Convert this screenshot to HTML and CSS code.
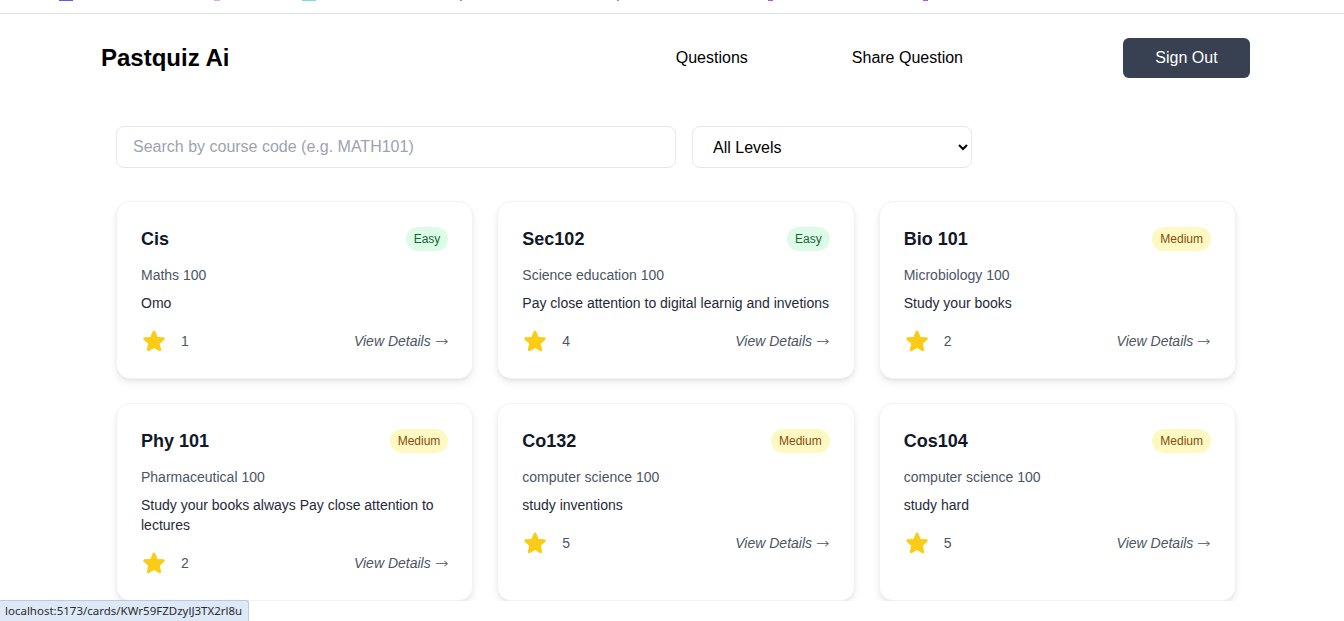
FILE: index.html
```html
<!DOCTYPE html>
<html lang="en">
<head>
<meta charset="utf-8">
<title>Pastquiz Ai</title>
<link rel="stylesheet" href="styles.css">
</head>
<body>
<div class="topstrip">
  <span class="mark m1"></span>
  <span class="mark m2"></span>
  <span class="mark m3"></span>
  <span class="mark m4"></span>
  <span class="mark m5"></span>
  <span class="mark m6"></span>
  <span class="mark m7"></span>
</div>
<header class="header">
  <div class="logo">Pastquiz Ai</div>
  <nav class="nav">
    <a class="nav-link" href="#">Questions</a>
    <a class="nav-link" href="#">Share Question</a>
  </nav>
  <button class="signout">Sign Out</button>
</header>
<main class="main">
  <div class="filters">
    <input class="search" type="text" placeholder="Search by course code (e.g. MATH101)">
    <select class="level">
      <option>All Levels</option>
      <option>100</option>
      <option>200</option>
    </select>
  </div>
  <div class="grid">
    <div class="card">
      <div class="card-head"><h3 class="title">Cis</h3><span class="badge easy">Easy</span></div>
      <p class="sub">Maths 100</p>
      <p class="desc">Omo</p>
      <div class="foot">
        <div class="rating"><svg class="star" viewBox="0 0 24 24"><path d="M10.788 3.21c.448-1.077 1.976-1.077 2.424 0l2.082 5.006 5.404.434c1.164.093 1.636 1.545.749 2.305l-4.117 3.527 1.257 5.273c.271 1.136-.964 2.033-1.96 1.425L12 18.354 7.373 21.18c-.996.608-2.231-.29-1.96-1.425l1.257-5.273-4.117-3.527c-.887-.76-.415-2.212.749-2.305l5.404-.434 2.082-5.005Z"/></svg><span class="count">1</span></div>
        <a class="details" href="#">View Details <span class="arrow">→</span></a>
      </div>
    </div>
    <div class="card">
      <div class="card-head"><h3 class="title">Sec102</h3><span class="badge easy">Easy</span></div>
      <p class="sub">Science education 100</p>
      <p class="desc">Pay close attention to digital learnig and invetions</p>
      <div class="foot">
        <div class="rating"><svg class="star" viewBox="0 0 24 24"><path d="M10.788 3.21c.448-1.077 1.976-1.077 2.424 0l2.082 5.006 5.404.434c1.164.093 1.636 1.545.749 2.305l-4.117 3.527 1.257 5.273c.271 1.136-.964 2.033-1.96 1.425L12 18.354 7.373 21.18c-.996.608-2.231-.29-1.96-1.425l1.257-5.273-4.117-3.527c-.887-.76-.415-2.212.749-2.305l5.404-.434 2.082-5.005Z"/></svg><span class="count">4</span></div>
        <a class="details" href="#">View Details <span class="arrow">→</span></a>
      </div>
    </div>
    <div class="card">
      <div class="card-head"><h3 class="title">Bio 101</h3><span class="badge medium">Medium</span></div>
      <p class="sub">Microbiology 100</p>
      <p class="desc">Study your books</p>
      <div class="foot">
        <div class="rating"><svg class="star" viewBox="0 0 24 24"><path d="M10.788 3.21c.448-1.077 1.976-1.077 2.424 0l2.082 5.006 5.404.434c1.164.093 1.636 1.545.749 2.305l-4.117 3.527 1.257 5.273c.271 1.136-.964 2.033-1.96 1.425L12 18.354 7.373 21.18c-.996.608-2.231-.29-1.96-1.425l1.257-5.273-4.117-3.527c-.887-.76-.415-2.212.749-2.305l5.404-.434 2.082-5.005Z"/></svg><span class="count">2</span></div>
        <a class="details" href="#">View Details <span class="arrow">→</span></a>
      </div>
    </div>
    <div class="card">
      <div class="card-head"><h3 class="title">Phy 101</h3><span class="badge medium">Medium</span></div>
      <p class="sub">Pharmaceutical 100</p>
      <p class="desc">Study your books always Pay close attention to lectures</p>
      <div class="foot">
        <div class="rating"><svg class="star" viewBox="0 0 24 24"><path d="M10.788 3.21c.448-1.077 1.976-1.077 2.424 0l2.082 5.006 5.404.434c1.164.093 1.636 1.545.749 2.305l-4.117 3.527 1.257 5.273c.271 1.136-.964 2.033-1.96 1.425L12 18.354 7.373 21.18c-.996.608-2.231-.29-1.96-1.425l1.257-5.273-4.117-3.527c-.887-.76-.415-2.212.749-2.305l5.404-.434 2.082-5.005Z"/></svg><span class="count">2</span></div>
        <a class="details" href="#">View Details <span class="arrow">→</span></a>
      </div>
    </div>
    <div class="card">
      <div class="card-head"><h3 class="title">Co132</h3><span class="badge medium">Medium</span></div>
      <p class="sub">computer science 100</p>
      <p class="desc">study inventions</p>
      <div class="foot">
        <div class="rating"><svg class="star" viewBox="0 0 24 24"><path d="M10.788 3.21c.448-1.077 1.976-1.077 2.424 0l2.082 5.006 5.404.434c1.164.093 1.636 1.545.749 2.305l-4.117 3.527 1.257 5.273c.271 1.136-.964 2.033-1.96 1.425L12 18.354 7.373 21.18c-.996.608-2.231-.29-1.96-1.425l1.257-5.273-4.117-3.527c-.887-.76-.415-2.212.749-2.305l5.404-.434 2.082-5.005Z"/></svg><span class="count">5</span></div>
        <a class="details" href="#">View Details <span class="arrow">→</span></a>
      </div>
    </div>
    <div class="card">
      <div class="card-head"><h3 class="title">Cos104</h3><span class="badge medium">Medium</span></div>
      <p class="sub">computer science 100</p>
      <p class="desc">study hard</p>
      <div class="foot">
        <div class="rating"><svg class="star" viewBox="0 0 24 24"><path d="M10.788 3.21c.448-1.077 1.976-1.077 2.424 0l2.082 5.006 5.404.434c1.164.093 1.636 1.545.749 2.305l-4.117 3.527 1.257 5.273c.271 1.136-.964 2.033-1.96 1.425L12 18.354 7.373 21.18c-.996.608-2.231-.29-1.96-1.425l1.257-5.273-4.117-3.527c-.887-.76-.415-2.212.749-2.305l5.404-.434 2.082-5.005Z"/></svg><span class="count">5</span></div>
        <a class="details" href="#">View Details <span class="arrow">→</span></a>
      </div>
    </div>
  </div>
</main>
<div class="statusbar">localhost:5173/cards/KWr59FZDzylJ3TX2rl8u</div>
</body>
</html>
```

FILE: styles.css
```css
* { box-sizing: border-box; }

html, body {
  margin: 0;
  padding: 0;
  background: #ffffff;
  font-family: "Liberation Sans", Arial, sans-serif;
  color: #111827;
  overflow: hidden;
}

.topstrip {
  height: 14px;
  border-bottom: 1px solid #e2e2e2;
  display: flex;
  align-items: flex-start;
}

.mark { display: block; height: 1px; }
.m1 { margin-left: 59px; width: 14px; background: #5a5cf0; }
.m2 { margin-left: 141px; width: 6px; background: #e7a9d8; }
.m3 { margin-left: 82px; width: 14px; background: #7ad9ec; }
.m4 { margin-left: 144px; width: 2px; background: #999; }
.m5 { margin-left: 155px; width: 2px; background: #999; }
.m6 { margin-left: 149px; width: 5px; background: #a855f7; }
.m7 { margin-left: 150px; width: 5px; background: #a855f7; }

.header {
  display: flex;
  align-items: center;
  padding: 24px 94px 24px 101px;
}

.logo {
  font-size: 24px;
  font-weight: 700;
  color: #000;
  line-height: 32px;
}

.nav {
  margin-left: auto;
  display: flex;
  gap: 104px;
}

.nav-link {
  color: #000;
  text-decoration: none;
  font-size: 16px;
  line-height: 24px;
}

.signout {
  margin-left: 160px;
  width: 127px;
  height: 40px;
  border: none;
  border-radius: 6px;
  background: #374151;
  color: #ffffff;
  font-family: "Liberation Sans", Arial, sans-serif;
  font-size: 16px;
}

.main {
  padding: 24px 108px 0 116px;
}

.filters {
  display: flex;
  gap: 16px;
  margin-bottom: 33px;
}

.search {
  width: 560px;
  height: 42px;
  border: 1px solid #e5e7eb;
  border-radius: 8px;
  padding: 0 16px;
  font-family: "Liberation Sans", Arial, sans-serif;
  font-size: 16px;
  color: #111827;
  outline: none;
}

.search::placeholder { color: #9ca3af; }

.level {
  width: 280px;
  height: 42px;
  border: 1px solid #e5e7eb;
  border-radius: 8px;
  padding: 0 12px 0 16px;
  background: #ffffff;
  font-family: "Liberation Sans", Arial, sans-serif;
  font-size: 16px;
  color: #000;
}

.grid {
  display: grid;
  grid-template-columns: repeat(3, 1fr);
  gap: 24px;
}

.card {
  background: #ffffff;
  border: 1px solid #f1f2f4;
  border-radius: 14px;
  padding: 23px 24px 24px 24px;
  box-shadow: 0 4px 8px -1px rgba(0, 0, 0, 0.09), 0 2px 4px -2px rgba(0, 0, 0, 0.08);
}

.card-head {
  display: flex;
  align-items: center;
  justify-content: space-between;
  height: 28px;
}

.title {
  margin: 0;
  font-size: 18px;
  font-weight: 700;
  line-height: 28px;
  color: #111827;
}

.badge {
  font-size: 12px;
  line-height: 16px;
  padding: 4px 8px;
  border-radius: 9999px;
}

.easy { background: #dcfce7; color: #166534; }
.medium { background: #fef9c3; color: #854d0e; }

.sub {
  margin: 12px 0 0;
  font-size: 14px;
  line-height: 20px;
  color: #4b5563;
}

.desc {
  margin: 8px 0 0;
  font-size: 14px;
  line-height: 20px;
  color: #1f2937;
}

.foot {
  margin-top: 15px;
  display: flex;
  align-items: center;
  justify-content: space-between;
  height: 26px;
}

.rating {
  display: flex;
  align-items: center;
  gap: 14px;
}

.star {
  width: 26px;
  height: 26px;
  fill: #facc15;
}

.count {
  font-size: 14px;
  color: #4b5563;
}

.details {
  font-size: 14px;
  font-style: italic;
  color: #4b5563;
  text-decoration: none;
}

.arrow {
  font-family: "DejaVu Sans", sans-serif;
  font-weight: 200;
  font-style: normal;
  font-size: 14px;
  display: inline-block;
  transform: scaleX(1.15);
  transform-origin: left center;
  margin-right: 2px;
}

.statusbar {
  position: fixed;
  left: 0;
  bottom: 0;
  height: 21px;
  padding: 0 6px 0 5px;
  line-height: 20px;
  font-family: "Noto Sans", "Liberation Sans", sans-serif;
  font-size: 11.5px;
  color: #2b2b2b;
  background: #dee9f8;
  border: 1px solid #b7cbe6;
  border-left: none;
  border-bottom: none;
  border-top-right-radius: 3px;
}
```
